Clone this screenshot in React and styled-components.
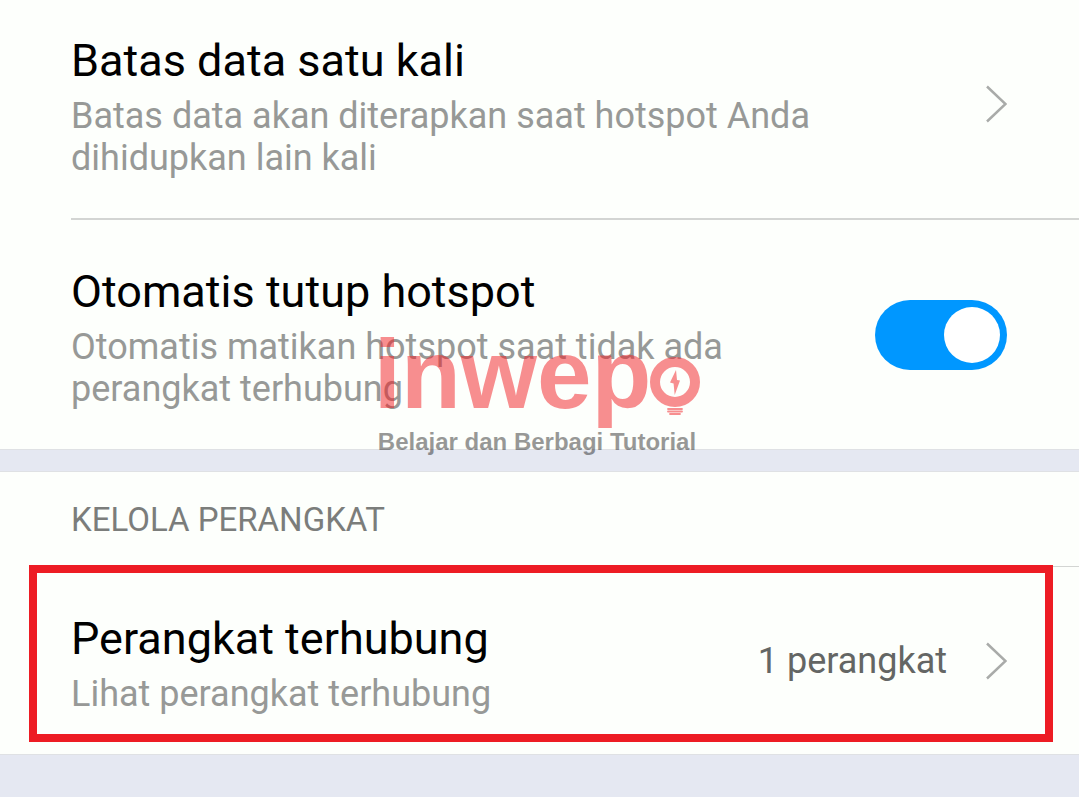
import React from 'react'
import styled, { createGlobalStyle } from 'styled-components'

const colors = {
  surface: '#fdfffc',
  band: '#e5e8f2',
  bandEdge: '#dfe1e4',
  divider: '#d3d5d3',
  title: '#000000',
  description: '#979997',
  heading: '#7b7d7b',
  value: '#646664',
  chevron: '#a9aba9',
  blue: '#0097ff',
  red: '#ed1c24',
  brand: '#f31f24',
}

const GlobalStyle = createGlobalStyle`
  body {
    margin: 0;
    background: ${colors.band};
    font-family: Roboto, 'Liberation Sans', sans-serif;
  }
`

const Page = styled.main`
  position: relative;
  box-sizing: border-box;
  min-height: 100vh;
  overflow: hidden;
`

const Panel = styled.section`
  margin-top: ${props => (props.scrolled ? '-12px' : '21px')};
  background: ${colors.surface};
  border-bottom: 1px solid ${colors.bandEdge};
  border-top: 1px solid ${colors.bandEdge};
`

const Row = styled.div`
  position: relative;
  display: flex;
  align-items: center;
  gap: 38px;
  padding: 0 72px 0 71px;
  color: inherit;
  text-decoration: none;
`

const Divider = styled.hr`
  height: ${props => (props.thin ? '1px' : '2px')};
  margin: 0 0 0 71px;
  border: 0;
  background: ${colors.divider};
`

const RowText = styled.div`
  flex: 1;
  min-width: 0;
  padding: 45px 0 39px;
`

const Title = styled.div`
  margin-bottom: 8px;
  font-size: 45px;
  line-height: 53px;
  color: ${colors.title};
`

const Description = styled.div`
  font-size: 36px;
  line-height: 42px;
  color: ${colors.description};
`

const Value = styled.span`
  font-size: 36px;
  line-height: 42px;
  color: ${colors.value};
`

const SectionHeading = styled.h2`
  margin: 0;
  padding: 28px 71px 27px;
  font-size: 33px;
  font-weight: 400;
  line-height: 39px;
  color: ${colors.heading};
`

const Highlight = styled.div`
  position: absolute;
  top: -2px;
  right: 26px;
  bottom: 12px;
  left: 29px;
  border: 8px solid ${colors.red};
  pointer-events: none;
`

const Switch = styled.input.attrs(() => ({
  type: 'checkbox',
  role: 'switch',
}))`
  appearance: none;
  flex: none;
  display: flex;
  align-items: center;
  justify-content: ${props => (props.checked ? 'flex-end' : 'flex-start')};
  box-sizing: border-box;
  width: 132px;
  height: 70px;
  margin: 0;
  padding: 0 7px;
  border-radius: 35px;
  background: ${props => (props.checked ? colors.blue : colors.divider)};
  cursor: pointer;
  &::before {
    content: '';
    width: 56px;
    height: 56px;
    border-radius: 50%;
    background: #ffffff;
  }
`

const StyledChevron = styled.svg`
  flex: none;
  width: 22px;
  height: 38px;
  fill: none;
  stroke: ${colors.chevron};
  stroke-width: 2.5;
`

const Watermark = styled.div`
  position: absolute;
  inset: 0;
  display: flex;
  flex-direction: column;
  align-items: center;
  justify-content: center;
  padding: 0 5px 22px 0;
  font-family: 'Liberation Sans', Arial, sans-serif;
  font-weight: 700;
  pointer-events: none;
`

const Brand = styled.div`
  display: flex;
  align-items: flex-end;
  font-size: 98px;
  line-height: 108px;
  color: ${colors.brand};
  opacity: 0.5;
`

const StyledBulb = styled.svg`
  width: 50px;
  height: 60px;
  margin: 0 0 12px -1px;
`

const Tagline = styled.div`
  font-size: 24px;
  line-height: 28px;
  color: #000000;
  opacity: 0.4;
`

const Chevron = () => (
  <StyledChevron viewBox="0 0 22 38" aria-hidden="true">
    <path d="M2 1.5 L20.5 19 L2 36.5" />
  </StyledChevron>
)

const Bulb = () => (
  <StyledBulb viewBox="1 0 50 60" aria-hidden="true">
    <circle cx="26" cy="26" r="20" fill="none" stroke="currentColor" strokeWidth="10" />
    <path d="M27 14 L21 26.5 L24.6 27.4 L25.7 39 L31 24.5 L28 24 Z" fill="currentColor" />
    <path
      d="M19 53 H33 M19 55.5 H33 M21 58 H31"
      fill="none"
      stroke="currentColor"
      strokeWidth="1.8"
      strokeLinecap="round"
    />
  </StyledBulb>
)

function App() {
  const [autoClose, setAutoClose] = React.useState(true)

  return (
    <React.Fragment>
      <GlobalStyle />
      <Page>
        <Panel scrolled>
          <Row as="a" href="#batas-data">
            <RowText>
              <Title>Batas data satu kali</Title>
              <Description>
                Batas data akan diterapkan saat hotspot Anda dihidupkan lain kali
              </Description>
            </RowText>
            <Chevron />
          </Row>
          <Divider />
          <Row as="label" htmlFor="auto-close">
            <RowText>
              <Title>Otomatis tutup hotspot</Title>
              <Description>
                Otomatis matikan hotspot saat tidak ada perangkat terhubung
              </Description>
            </RowText>
            <Switch
              id="auto-close"
              checked={autoClose}
              onChange={e => setAutoClose(e.target.checked)}
            />
          </Row>
        </Panel>
        <Panel>
          <SectionHeading>KELOLA PERANGKAT</SectionHeading>
          <Divider thin />
          <Row as="a" href="#perangkat-terhubung">
            <RowText>
              <Title>Perangkat terhubung</Title>
              <Description>Lihat perangkat terhubung</Description>
            </RowText>
            <Value>1 perangkat</Value>
            <Chevron />
            <Highlight />
          </Row>
        </Panel>
        <Watermark>
          <Brand>
            <span>inwep</span>
            <Bulb />
          </Brand>
          <Tagline>Belajar dan Berbagi Tutorial</Tagline>
        </Watermark>
      </Page>
    </React.Fragment>
  )
}

export default App
